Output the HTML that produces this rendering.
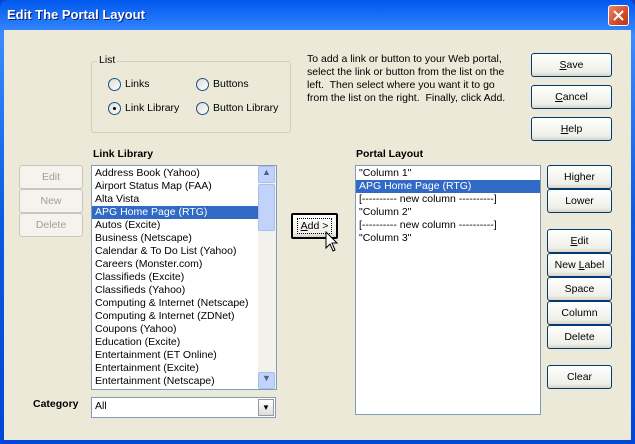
<!DOCTYPE html>
<html><head><style>
*{box-sizing:border-box;margin:0;padding:0}
body{width:635px;height:444px;overflow:hidden;font-family:Tahoma,"Liberation Sans",sans-serif;font-size:10.5px;color:#000;position:relative;background:#0a3fd0}
.win{position:absolute;left:0;top:0;width:635px;height:444px;background:linear-gradient(#0058ee,#3a8cff 8%,#0a5ae0 50%,#0046d8);border-radius:7px 7px 0 0}
.title{position:absolute;left:7px;top:7px;color:#fff;font-weight:bold;font-size:13px;text-shadow:1px 1px #0a1f7a}
.close{position:absolute;left:608px;top:5px;width:21px;height:21px;border:1px solid #fff;border-radius:3px;background:linear-gradient(135deg,#e9876a,#d24a2a 60%,#b8341a)}
.client{position:absolute;left:4px;top:30px;width:627px;height:410px;background:#ECE9D8}
.a{position:absolute}
.btn{position:absolute;border:1px solid #003c74;border-radius:3px;background:linear-gradient(#fff,#f0efe8 80%,#d8d5c8);text-align:center;font-size:10.5px;display:flex;align-items:center;justify-content:center;white-space:pre}
.dis{border-color:#c9c7ba;color:#a19f92;background:#f4f3ee}
.list{position:absolute;background:#fff;border:1px solid #7f9db9;overflow:hidden}
.list div{height:13px;line-height:13px;padding-left:3px;white-space:nowrap}
.sel{background:#316ac5;color:#fff}
.radio{position:absolute;width:13px;height:13px;border:1px solid #1c5180;border-radius:50%;background:linear-gradient(135deg,#dcdcd5,#fff)}
</style></head><body>
<div class="win">
<div class="title">Edit The Portal Layout</div>
<div class="close"><svg width="19" height="19"><path d="M5 5L14 14M14 5L5 14" stroke="#fff" stroke-width="2"/></svg></div>
</div>
<div class="client"></div>
<div class="a" style="left:91px;top:61px;width:200px;height:72px;border:1px solid #d0d0bf;border-radius:3px"></div>
<div class="a" style="left:97px;top:54px;background:#ECE9D8;padding:0 2px">List</div>
<div class="radio" style="left:108px;top:78px"></div><div class="a" style="left:125px;top:78px">Links</div>
<div class="radio" style="left:196px;top:78px"></div><div class="a" style="left:213px;top:78px">Buttons</div>
<div class="radio" style="left:108px;top:102px"><div style="position:absolute;left:4px;top:4px;width:3px;height:3px;background:#000;border-radius:50%"></div></div><div class="a" style="left:125px;top:102px">Link Library</div>
<div class="radio" style="left:196px;top:102px"></div><div class="a" style="left:213px;top:102px">Button Library</div>
<div class="a" style="left:307px;top:53px;line-height:13px;width:215px">To add a link or button to your Web portal, select the link or button from the list on the left.&nbsp; Then select where you want it to go<br>from the list on the right.&nbsp; Finally, click Add.</div>
<div class="btn" style="left:531px;top:53px;width:81px;height:24px"><u>S</u>ave</div>
<div class="btn" style="left:531px;top:85px;width:81px;height:24px"><u>C</u>ancel</div>
<div class="btn" style="left:531px;top:117px;width:81px;height:24px"><u>H</u>elp</div>
<div class="a" style="left:93px;top:148px;font-weight:bold">Link Library</div>
<div class="a" style="left:356px;top:148px;font-weight:bold">Portal Layout</div>
<div class="btn dis" style="left:19px;top:165px;width:64px;height:24px">Edit</div>
<div class="btn dis" style="left:19px;top:189px;width:64px;height:24px">New</div>
<div class="btn dis" style="left:19px;top:213px;width:64px;height:24px">Delete</div>
<div class="list" style="left:91px;top:165px;width:186px;height:225px;padding-top:1px">
<div>Address Book (Yahoo)</div><div>Airport Status Map (FAA)</div><div>Alta Vista</div><div class="sel" style="margin-right:18px">APG Home Page (RTG)</div><div>Autos (Excite)</div><div>Business (Netscape)</div><div>Calendar &amp; To Do List (Yahoo)</div><div>Careers (Monster.com)</div><div>Classifieds (Excite)</div><div>Classifieds (Yahoo)</div><div>Computing &amp; Internet (Netscape)</div><div>Computing &amp; Internet (ZDNet)</div><div>Coupons (Yahoo)</div><div>Education (Excite)</div><div>Entertainment (ET Online)</div><div>Entertainment (Excite)</div><div>Entertainment (Netscape)</div>
</div>
<div class="a" style="left:258px;top:166px;width:18px;height:223px;background:#f3f1ec"></div>
<div class="a" style="left:258px;top:166px;width:17px;height:17px;background:#c1d3fb;border:1px solid #a9bfe8;border-radius:2px;text-align:center;font-size:9px;color:#4d6185">&#9650;</div>
<div class="a" style="left:258px;top:184px;width:17px;height:47px;background:#c1d3fb;border:1px solid #a9bfe8;border-radius:2px"></div>
<div class="a" style="left:258px;top:372px;width:17px;height:17px;background:#c1d3fb;border:1px solid #a9bfe8;border-radius:2px;text-align:center;font-size:9px;color:#4d6185">&#9660;</div>
<div class="btn" style="left:291px;top:213px;width:47px;height:26px;border:2px solid #000;border-radius:2px"><span style="border:1px dotted #000;padding:1px 3px"><u>A</u>dd &gt;</span></div>
<svg class="a" style="left:325px;top:231px" width="14" height="22"><path d="M1 1V17L5 13L8 20L10 19L7 12H12Z" fill="#fff" stroke="#000"/></svg>
<div class="list" style="left:355px;top:165px;width:186px;height:250px;padding-top:1px">
<div>"Column 1"</div><div class="sel">APG Home Page (RTG)</div><div>[---------- new column ----------]</div><div>"Column 2"</div><div>[---------- new column ----------]</div><div>"Column 3"</div>
</div>
<div class="btn" style="left:547px;top:165px;width:65px;height:24px">Higher</div>
<div class="btn" style="left:547px;top:189px;width:65px;height:24px">Lower</div>
<div class="btn" style="left:547px;top:229px;width:65px;height:24px"><u>E</u>dit</div>
<div class="btn" style="left:547px;top:253px;width:65px;height:24px">New <u>L</u>abel</div>
<div class="btn" style="left:547px;top:277px;width:65px;height:24px">Space</div>
<div class="btn" style="left:547px;top:301px;width:65px;height:24px">Column</div>
<div class="btn" style="left:547px;top:325px;width:65px;height:24px">Delete</div>
<div class="btn" style="left:547px;top:365px;width:65px;height:24px">Clear</div>
<div class="a" style="left:33px;top:398px;font-weight:bold">Category</div>
<div class="a" style="left:91px;top:397px;width:185px;height:21px;background:#fff;border:1px solid #7f9db9;padding:2px 3px">All</div>
<div class="a" style="left:258px;top:399px;width:16px;height:17px;background:linear-gradient(#fff,#ddd);border:1px solid #999;font-size:8px;text-align:center;line-height:15px">&#9660;</div>
</body></html>
